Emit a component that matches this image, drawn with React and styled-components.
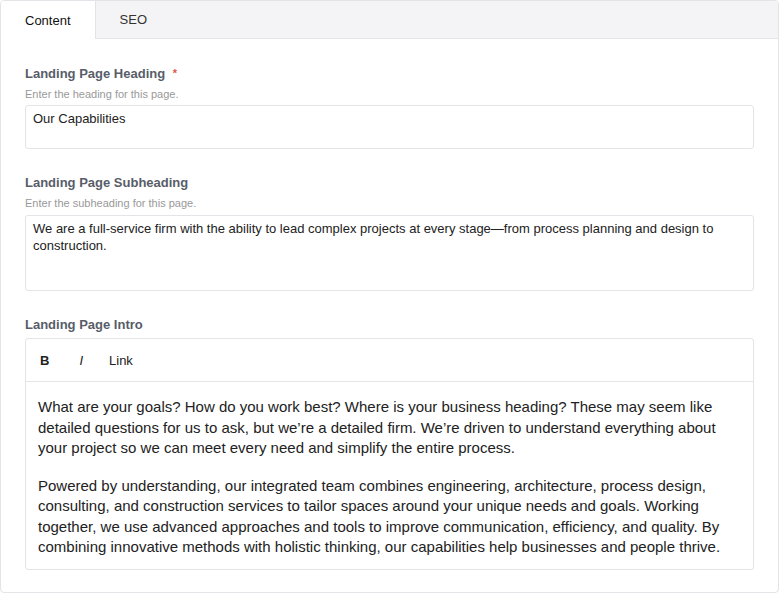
import React, { useState } from "react";
import styled, { createGlobalStyle } from "styled-components";

const GlobalStyle = createGlobalStyle`
  body {
    margin: 0;
    background: #fff;
    font-family: "Liberation Sans", Arial, sans-serif;
  }
  * {
    box-sizing: border-box;
  }
`;

const App = () => {
  const [tab, setTab] = useState("content");
  const [heading, setHeading] = useState("Our Capabilities");
  const [subheading, setSubheading] = useState(
    "We are a full-service firm with the ability to lead complex projects at every stage\u2014from process planning and design to construction."
  );

  return (
    <>
      <GlobalStyle />
      <Panel>
        <Tabs>
          <Tab active={tab === "content"} onClick={() => setTab("content")}>
            Content
          </Tab>
          <Tab active={tab === "seo"} onClick={() => setTab("seo")}>
            SEO
          </Tab>
        </Tabs>
        <Body>
          <Field>
            <Label>
              Landing Page Heading <Required>*</Required>
            </Label>
            <Help>Enter the heading for this page.</Help>
            <Input
              value={heading}
              onChange={(e) => setHeading(e.target.value)}
            />
          </Field>
          <Field>
            <Label>Landing Page Subheading</Label>
            <Help>Enter the subheading for this page.</Help>
            <TextArea
              value={subheading}
              onChange={(e) => setSubheading(e.target.value)}
            />
          </Field>
          <Field>
            <Label>Landing Page Intro</Label>
            <Editor>
              <Toolbar>
                <ToolButton bold>B</ToolButton>
                <ToolButton italic>I</ToolButton>
                <ToolButton>Link</ToolButton>
              </Toolbar>
              <EditorContent>
                <p>
                  What are your goals? How do you work best? Where is your
                  business heading? These may seem like detailed questions for
                  us to ask, but we’re a detailed firm. We’re driven to
                  understand everything about your project so we can meet every
                  need and simplify the entire process.
                </p>
                <p>
                  Powered by understanding, our integrated team combines
                  engineering, architecture, process design, consulting, and
                  construction services to tailor spaces around your unique
                  needs and goals. Working together, we use advanced approaches
                  and tools to improve communication, efficiency, and quality.
                  By combining innovative methods with holistic thinking, our
                  capabilities help businesses and people thrive.
                </p>
              </EditorContent>
            </Editor>
          </Field>
        </Body>
      </Panel>
    </>
  );
};

export default App;

const Panel = styled.div`
  width: 779px;
  height: 593px;
  border: 1px solid #e3e3e8;
  border-radius: 4px;
  overflow: hidden;
  background: #fff;
`;

const Tabs = styled.div`
  display: flex;
  height: 38px;
  background: #f4f4f6;
  border-bottom: 1px solid #e3e3e8;
`;

const Tab = styled.div`
  display: flex;
  align-items: center;
  padding: 0 24px;
  font-size: 13px;
  color: ${(p) => (p.active ? "#111" : "#333")};
  background: ${(p) => (p.active ? "#fff" : "transparent")};
  border-right: ${(p) => (p.active ? "1px solid #e3e3e8" : "none")};
  margin-bottom: ${(p) => (p.active ? "-1px" : "0")};
  cursor: pointer;
`;

const Body = styled.div`
  padding: 25px 24px 0;
  display: flex;
  flex-direction: column;
  gap: 25px;
`;

const Field = styled.div`
  display: flex;
  flex-direction: column;
`;

const Label = styled.div`
  font-size: 13px;
  font-weight: 700;
  line-height: 18px;
  color: #575d69;
  margin-bottom: 3px;
`;

const Required = styled.span`
  color: #e0544a;
  margin-left: 4px;
  font-size: 11px;
  vertical-align: 1px;
`;

const Help = styled.div`
  font-size: 11px;
  line-height: 16px;
  color: #999;
  margin-bottom: 3px;
`;

const Input = styled.input`
  height: 44px;
  padding: 0 7px 17px;
  font-family: inherit;
  font-size: 13px;
  color: #222;
  border: 1px solid #e3e3e8;
  border-radius: 3px;
  outline: none;
`;

const TextArea = styled.textarea`
  height: 76px;
  margin-top: 1px;
  padding: 5px 7px;
  font-family: inherit;
  font-size: 13px;
  line-height: 16.5px;
  color: #222;
  border: 1px solid #e3e3e8;
  border-radius: 3px;
  outline: none;
  resize: none;
`;

const Editor = styled.div`
  border: 1px solid #e3e3e8;
  border-radius: 3px;
  margin-top: 1px;
`;

const Toolbar = styled.div`
  display: flex;
  align-items: center;
  height: 43px;
  padding-left: 14px;
  border-bottom: 1px solid #e3e3e8;
`;

const ToolButton = styled.button`
  background: none;
  border: none;
  padding: 0;
  margin-right: ${(p) => (p.bold ? "30px" : p.italic ? "26px" : "0")};
  font-family: inherit;
  font-size: 13px;
  font-weight: ${(p) => (p.bold ? 700 : 400)};
  font-style: ${(p) => (p.italic ? "italic" : "normal")};
  color: #222;
  cursor: pointer;
`;

const EditorContent = styled.div`
  padding: 15px 12px 11px;
  font-size: 15px;
  line-height: 20.5px;
  color: #222;

  p {
    margin: 0 0 17px;
  }
  p:last-child {
    margin-bottom: 0;
  }
`;
